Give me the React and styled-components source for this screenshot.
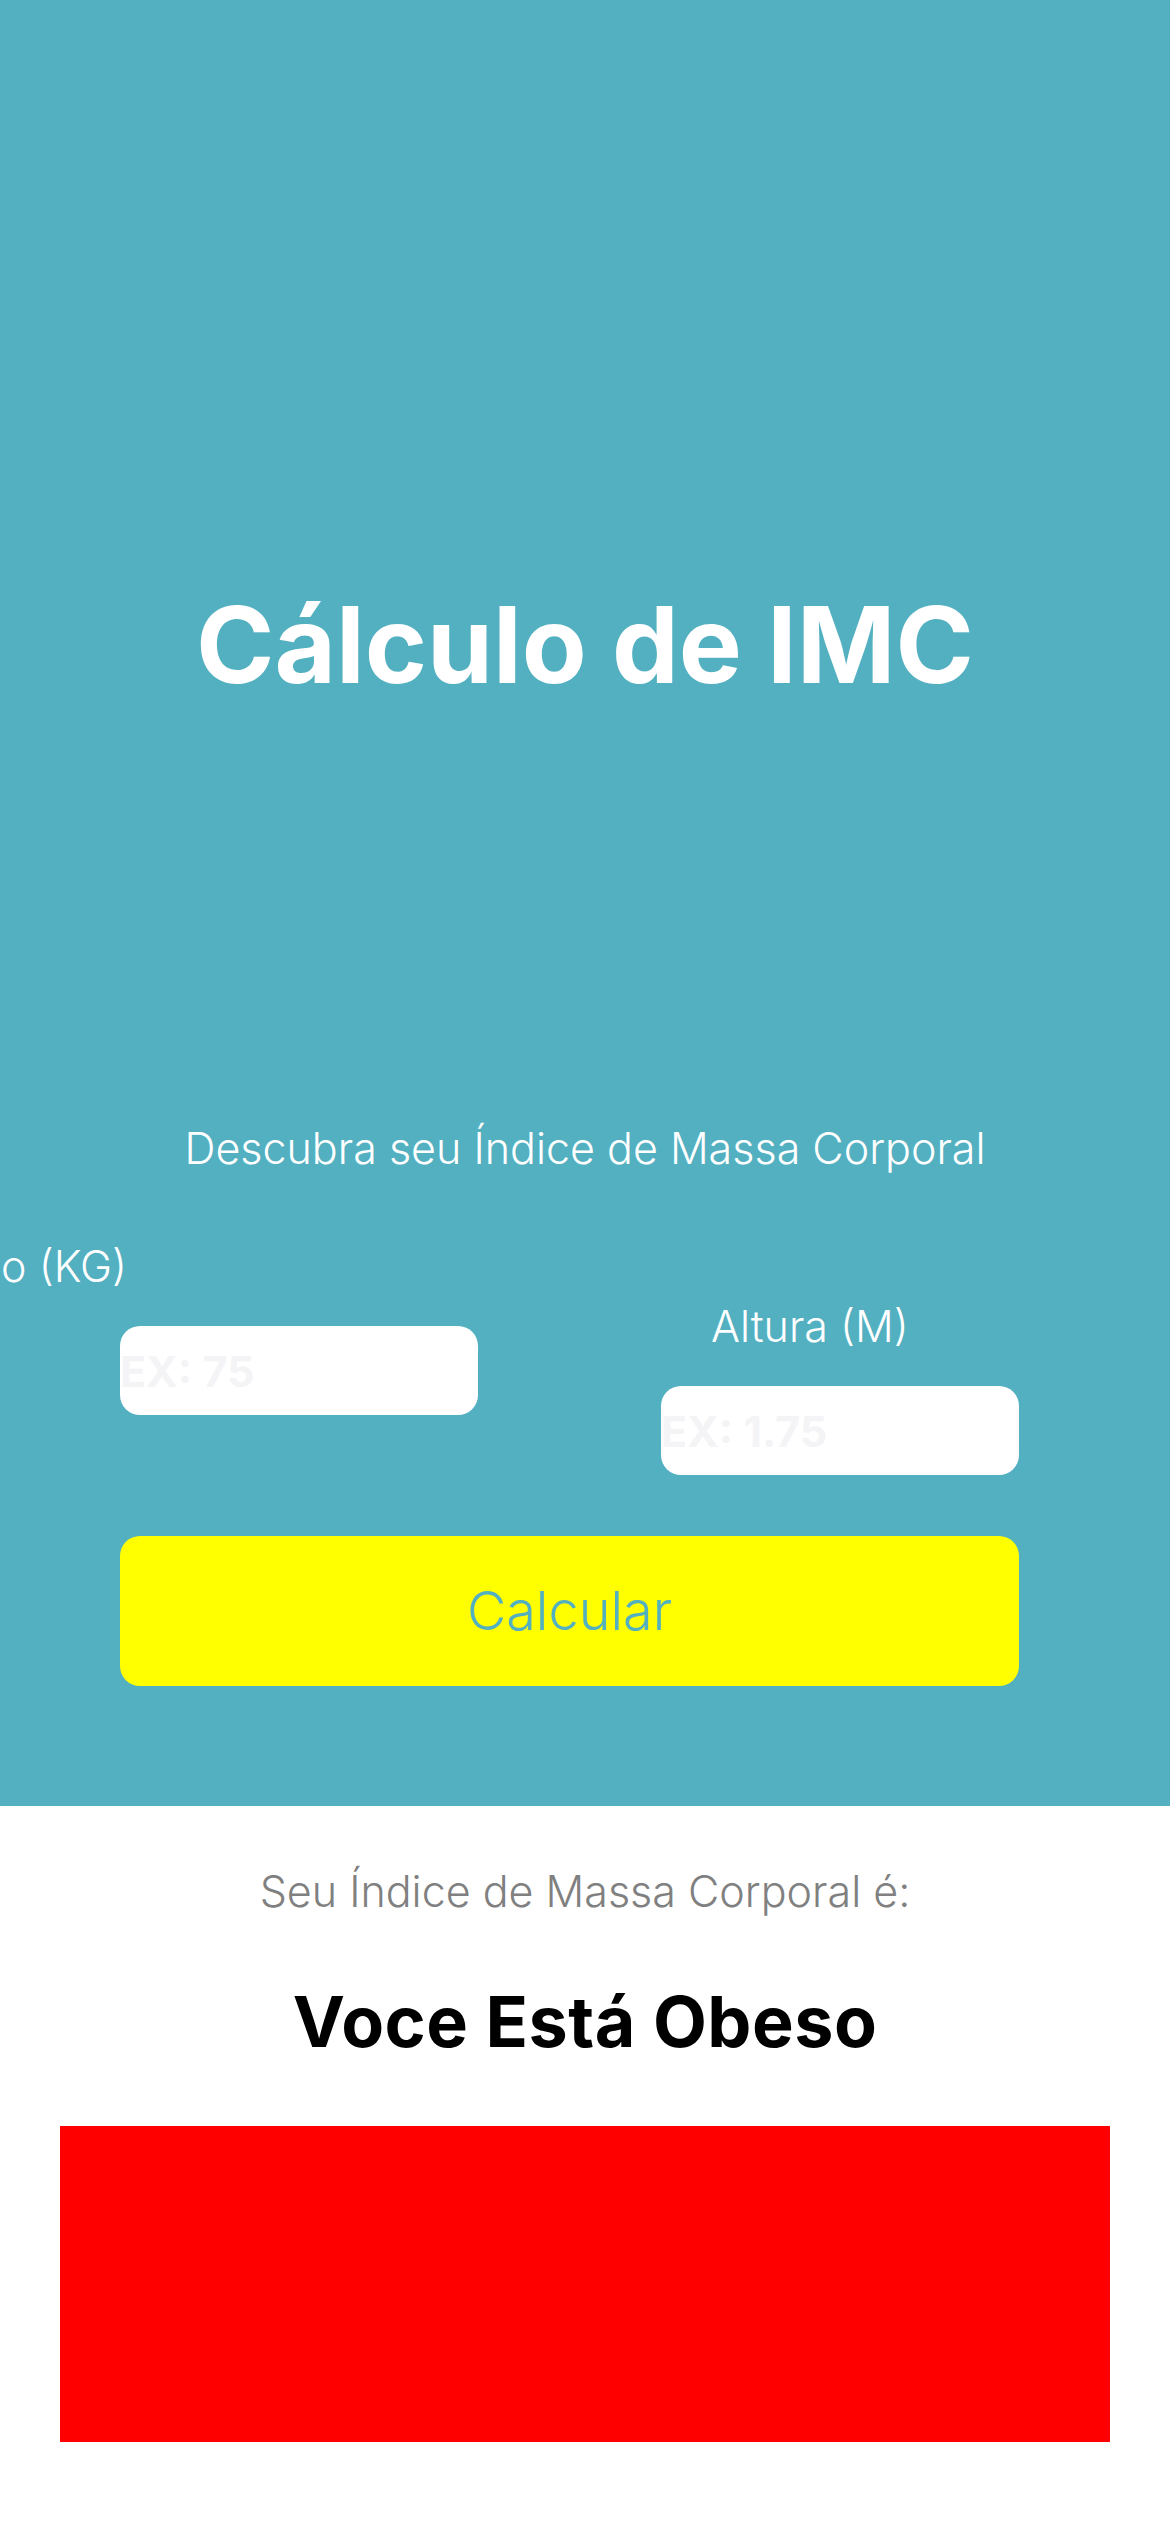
import React from "react";
import styled, { createGlobalStyle } from "styled-components";

const GlobalStyle = createGlobalStyle`
  html, body {
    margin: 0;
    padding: 0;
    background: #ffffff;
  }
  body {
    font-family: Inter, "Noto Sans", "Liberation Sans", sans-serif;
  }
`;

export default function App() {
  return (
    <Page>
      <GlobalStyle />
      <Header>
        <Title>Cálculo de IMC</Title>
        <Subtitle>Descubra seu Índice de Massa Corporal</Subtitle>
        <Form>
          <Fields>
            <Column>
              <LabelSlot width="7px">
                <Label>Peso (KG)</Label>
              </LabelSlot>
              <Input placeholder="EX: 75" />
            </Column>
            <Column offset="60px">
              <LabelSlot indent="50px">
                <Label>Altura (M)</Label>
              </LabelSlot>
              <Input placeholder="EX: 1.75" />
            </Column>
          </Fields>
          <CalcButton>Calcular</CalcButton>
        </Form>
      </Header>
      <Result>
        <ResultCaption>Seu Índice de Massa Corporal é:</ResultCaption>
        <ResultText>Voce Está Obeso</ResultText>
        <StatusBox color="#ff0000" />
      </Result>
    </Page>
  );
}

const Page = styled.div`
  width: 1170px;
  min-height: 2532px;
  background: #ffffff;
`;

const Header = styled.section`
  background: #52b0c1;
  padding: 592px 0 120px;
  display: flex;
  flex-direction: column;
`;

const Title = styled.h1`
  margin: 0;
  text-align: center;
  color: #ffffff;
  font-size: 106px;
  font-weight: 700;
  line-height: 1;
  letter-spacing: 0;
`;

const Subtitle = styled.p`
  margin: 429px 0 0;
  text-align: center;
  color: #ffffff;
  font-size: 43px;
  font-weight: 300;
  line-height: 1;
`;

const Form = styled.div`
  margin: 75px 151px 0 120px;
  display: flex;
  flex-direction: column;
`;

const Fields = styled.div`
  display: flex;
  justify-content: space-between;
  align-items: flex-start;
`;

const Column = styled.div`
  width: 358px;
  margin-top: ${(props) => props.offset || "0"};
  display: flex;
  flex-direction: column;
`;

// label text may overflow its slot (left one runs off screen)
const LabelSlot = styled.div`
  display: flex;
  justify-content: flex-end;
  align-self: flex-start;
  width: ${(props) => props.width || "auto"};
  margin-left: ${(props) => props.indent || "0"};
  height: 43px;
`;

const Label = styled.span`
  flex-shrink: 0;
  white-space: nowrap;
  color: #ffffff;
  font-size: 43px;
  font-weight: 300;
  line-height: 1;
`;

const Input = styled.input`
  margin-top: 38px;
  box-sizing: border-box;
  width: 100%;
  height: 89px;
  padding: 0;
  border: none;
  outline: none;
  border-radius: 20px;
  background: #ffffff;
  font-family: inherit;
  font-size: 43px;
  font-weight: 700;
  color: #222;

  &::placeholder {
    color: #f4f4f6;
  }
`;

const CalcButton = styled.button`
  margin-top: 61px;
  height: 150px;
  width: 100%;
  border: none;
  border-radius: 20px;
  background: #ffff00;
  color: #52b0c1;
  font-family: inherit;
  font-size: 54px;
  font-weight: 300;
  line-height: 1;
`;

const Result = styled.section`
  padding-top: 64px;
  display: flex;
  flex-direction: column;
  align-items: center;
`;

const ResultCaption = styled.p`
  margin: 0;
  color: #808080;
  font-size: 43px;
  font-weight: 300;
  line-height: 1;
`;

const ResultText = styled.h2`
  margin: 74px 0 0;
  color: #000000;
  font-size: 70px;
  font-weight: 700;
  line-height: 1;
  letter-spacing: 0.5px;
`;

const StatusBox = styled.div`
  margin-top: 69px;
  width: 1050px;
  height: 316px;
  background: ${(props) => props.color};
`;
